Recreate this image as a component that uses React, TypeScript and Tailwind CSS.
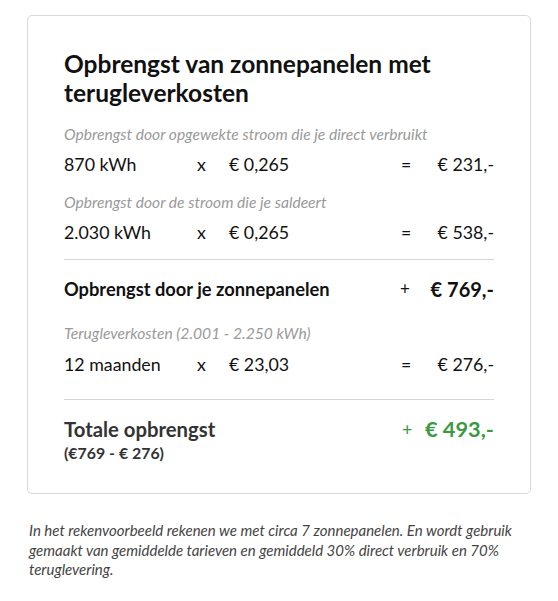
const rows = [
  { label: 'Opbrengst door opgewekte stroom die je direct verbruikt', qty: '870 kWh', price: '€ 0,265', total: '€ 231,-' },
  { label: 'Opbrengst door de stroom die je saldeert', qty: '2.030 kWh', price: '€ 0,265', total: '€ 538,-' },
];

function CalcRow({ qty, price, total }: { qty: string; price: string; total: string }) {
  return (
    <div className="grid grid-cols-[133px_32px_172px_1fr] items-center text-[17.8px] leading-[26px] text-[#111]">
      <span>{qty}</span>
      <span>x</span>
      <span>{price}</span>
      <div className="flex justify-between">
        <span>=</span>
        <span>{total}</span>
      </div>
    </div>
  );
}

export default function App() {
  return (
    <div className="min-h-screen bg-white font-['Lato','Liberation_Sans',sans-serif]">
      <div className="ml-[27px] mr-[27px] pt-[15px]">
        <div className="rounded-[5px] border border-[#d9d9d9] px-[36px] pb-[29px] pt-[33px]">
          <h2 className="text-[24.5px] font-bold leading-[29px] text-[#111]">
            Opbrengst van zonnepanelen met terugleverkosten
          </h2>

          <div className="mt-[16px]">
            {rows.map((r, i) => (
              <div key={i} className={i > 0 ? 'mt-[14px]' : ''}>
                <p className="text-[15.6px] italic leading-[22px] text-[#9a9a9a]">{r.label}</p>
                <div className="mt-[6px]">
                  <CalcRow qty={r.qty} price={r.price} total={r.total} />
                </div>
              </div>
            ))}
          </div>

          <div className="mt-[14px] border-t border-[#d6d6d6]" />

          <div className="flex items-center justify-between pb-[20px] pt-[16px] text-[18.3px] font-bold leading-[26px] text-[#111]">
            <span>Opbrengst door je zonnepanelen</span>
            <div className="flex w-[94px] items-center justify-between">
              <span className="text-[17px] font-normal">+</span>
              <span className="text-[20px]">€ 769,-</span>
            </div>
          </div>

          <p className="text-[15.6px] italic leading-[22px] text-[#9a9a9a]">
            Terugleverkosten (2.001 - 2.250 kWh)
          </p>
          <div className="mt-[7px]">
            <CalcRow qty="12 maanden" price="€ 23,03" total="€ 276,-" />
          </div>

          <div className="mt-[22px] border-t border-[#d6d6d6]" />

          <div className="flex items-start justify-between pt-[16px]">
            <div>
              <p className="text-[20.3px] font-bold leading-[26px] text-[#333]">Totale opbrengst</p>
              <p className="text-[15.9px] font-bold leading-[22px] text-[#333]">(€769 - € 276)</p>
            </div>
            <div className="flex w-[92px] items-center justify-between text-[#3a9a3e]">
              <span className="text-[18px] leading-[26px]">+</span>
              <span className="text-[21.8px] font-bold leading-[26px]">€ 493,-</span>
            </div>
          </div>
        </div>

        <p className="ml-[2px] mt-[27px] text-[15px] italic leading-[19.5px] text-[#444]">
          In het rekenvoorbeeld rekenen we met circa 7 zonnepanelen. En wordt gebruik gemaakt van gemiddelde tarieven en gemiddeld 30% direct verbruik en 70% teruglevering.
        </p>
      </div>
    </div>
  );
}
